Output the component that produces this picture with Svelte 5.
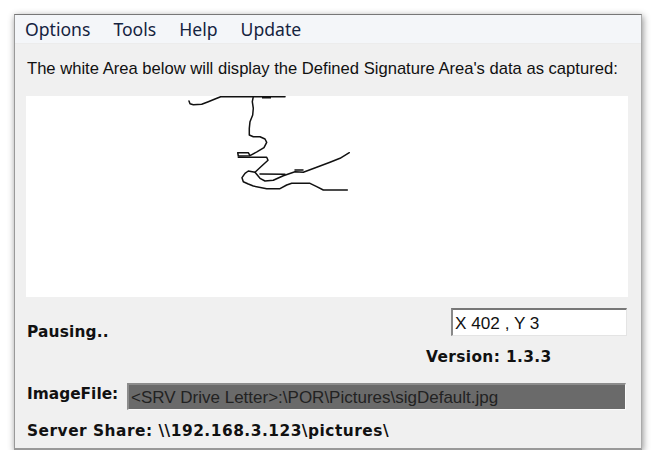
<script lang="ts">
  const menus = ['Options', 'Tools', 'Help', 'Update'];
  // signature, traced in page coordinates
  const strokes = [
    'M189 101 L190 103.7 L193.3 104.7 L201.7 104.3 L208.3 101.7 L215 99 L220.7 96.7 L285 96.7',
    'M253.3 96.7 L252.3 101.7 L253.3 108.3 L252.7 115 L250 121.7 L249.3 128.3 L249.3 135 L253.3 136.7 L260 136.7 L265 139 L266.7 142.3 L264 147.7 L257.3 151.7 L250 155.7 L238.3 156 L237.7 152.7 L248.3 152.7 L250 155.7',
    'M238.3 157.3 L266.7 157.3 L268 160.3 L261.7 166 L255 172.3 L248.3 171 L245 173.3 L242 177.7 L243.3 181.7 L248.3 184 L253.3 186 L266.7 188.7 L280 188.7 L286.7 185 L291.7 183.3 L310 183.3 L316.7 186.7 L323.3 190 L347.3 190',
    'M255 172.3 L260 178.3 L265 181 L273.3 180.3 L283.3 175.7 L295 171.7 L303.3 172.3 L316.7 167.3 L330 162.3 L340 158.3 L349.3 152.7',
    'M260 174 L285 174.3 M295 170 L303 170'
  ];
</script>

<div class="window">
  <nav class="menubar">
    {#each menus as item}
      <span class="menu-item">{item}</span>
    {/each}
  </nav>
  <main class="body">
    <p class="hint">The white Area below will display the Defined Signature Area's data as captured:</p>
    <svg class="canvas" viewBox="26 96 602 201" width="602" height="201">
      {#each strokes as d}
        <path {d} />
      {/each}
      <rect x="262" y="96" width="9" height="2.5" />
    </svg>
    <div class="status-row">
      <span class="label pausing">Pausing..</span>
      <div class="coords">X 402 , Y 3</div>
    </div>
    <div class="version label">Version: 1.3.3</div>
    <div class="image-row">
      <span class="label">ImageFile:</span>
      <div class="image-field">&lt;SRV Drive Letter&gt;:\POR\Pictures\sigDefault.jpg</div>
    </div>
    <div class="label share">Server Share: \\192.168.3.123\pictures\</div>
  </main>
</div>

<style>
:global(body) { margin: 0; background: #fff; }
.window { box-sizing: border-box; width: 628px; height: 436px; margin: 14px 0 0 14px; display: flex; flex-direction: column; background: #f0f0f0; border-top: 1px solid #777; border-left: 1px solid #999; border-right: 1px solid #aaa; border-bottom: 2px solid #999; box-shadow: 1px 2px 7px rgba(0, 0, 0, 0.45); color: #111; }
.menubar { height: 28px; flex-shrink: 0; display: flex; align-items: center; gap: 23px; padding-left: 10px; background: #f4f6f9; border-bottom: 1px solid #ececec; font-family: "Noto Sans", sans-serif; font-size: 17.6px; color: #15233f; }
.body { flex: 1; display: flex; flex-direction: column; padding: 0 13px 0 11px; }
.hint { margin: 14px 0 0 1px; height: 38px; line-height: 22px; font-family: "Liberation Sans", sans-serif; font-size: 16.6px; white-space: nowrap; }
.canvas { display: block; flex-shrink: 0; background: #fff; }
.canvas path { fill: none; stroke: #111; stroke-width: 1.5; stroke-linejoin: round; stroke-linecap: round; }
.canvas rect { fill: #111; }
.status-row { display: flex; justify-content: space-between; margin-top: 11px; height: 28px; }
.label { font-family: "DejaVu Sans", sans-serif; font-weight: bold; font-size: 15.4px; white-space: nowrap; }
.pausing { margin: 15px 0 0 1px; line-height: 18px; letter-spacing: 0.15px; }
.coords { box-sizing: border-box; width: 176px; height: 28px; background: #fff; border-top: 2px solid #777; border-left: 2px solid #888; border-right: 1px solid #e4e4e4; border-bottom: 1px solid #e4e4e4; font-family: "Liberation Sans", sans-serif; font-size: 17.2px; line-height: 26px; padding-left: 2px; margin-right: 1px; }
.version { margin: 12px 0 0 400px; line-height: 18px; letter-spacing: 0.37px; }
.image-row { display: flex; margin-top: 17px; height: 27px; }
.image-row .label { margin-left: 1px; width: 100px; line-height: 22px; }
.image-field { box-sizing: border-box; width: 499px; height: 27px; background: #6a6a6a; border-top: 2px solid #8c8c8c; border-left: 2px solid #8c8c8c; border-bottom: 1px solid #fafafa; border-right: 1px solid #fafafa; font-family: "Liberation Sans", sans-serif; font-size: 17px; line-height: 26px; padding-left: 2px; color: #222; }
.share { margin: 12px 0 0 1px; line-height: 18px; letter-spacing: 0.5px; }
</style>
